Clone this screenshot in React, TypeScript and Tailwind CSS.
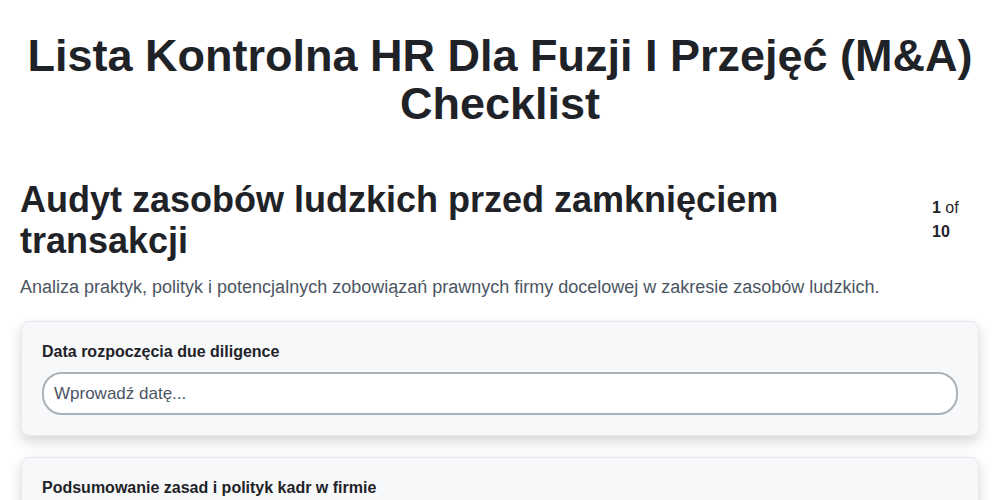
export default function App() {
  const fields = [
    { label: "Data rozpoczęcia due diligence", placeholder: "Wprowadź datę..." },
    { label: "Podsumowanie zasad i polityk kadr w firmie", placeholder: "Wprowadź podsumowanie..." },
  ]

  return (
    <div className="min-h-screen bg-white px-5 pt-8 pb-10 text-[#1f2328]" style={{ fontFamily: '"Liberation Sans", Arial, sans-serif' }}>
      {/* Title */}
      <h1 className="text-center text-[45px] font-bold leading-[48px] mb-[51px]">
        Lista Kontrolna HR Dla Fuzji I Przejęć (M&amp;A) Checklist
      </h1>

      {/* Section header */}
      <div className="flex items-center justify-between">
        <h2 className="flex-1 text-[36px] font-bold leading-[41px] pr-10">
          Audyt zasobów ludzkich przed zamknięciem transakcji
        </h2>
        <div className="w-12 text-base leading-6">
          <span className="font-bold">1</span> of <span className="font-bold">10</span>
        </div>
      </div>
      <p className="mt-3 mb-5 text-lg leading-7 text-[#4b5563]">
        Analiza praktyk, polityk i potencjalnych zobowiązań prawnych firmy docelowej w zakresie zasobów ludzkich.
      </p>

      {/* Fields */}
      <div className="flex flex-col gap-[21px]">
        {fields.map((f) => (
          <div
            key={f.label}
            className="mx-px rounded-lg border border-[#e6e7ee] bg-[#f7f8fa] p-5 shadow-[0_6px_14px_rgba(0,0,0,0.16)]"
          >
            <label className="mb-2.5 block text-base font-bold leading-5">{f.label}</label>
            <input
              type="text"
              placeholder={f.placeholder}
              className="block h-[43px] w-full rounded-[20px] border-2 border-[#aab1ba] bg-white px-2.5 text-[17px] text-[#1f2328] placeholder:text-[#4b5563] outline-none"
            />
          </div>
        ))}
      </div>
    </div>
  )
}
